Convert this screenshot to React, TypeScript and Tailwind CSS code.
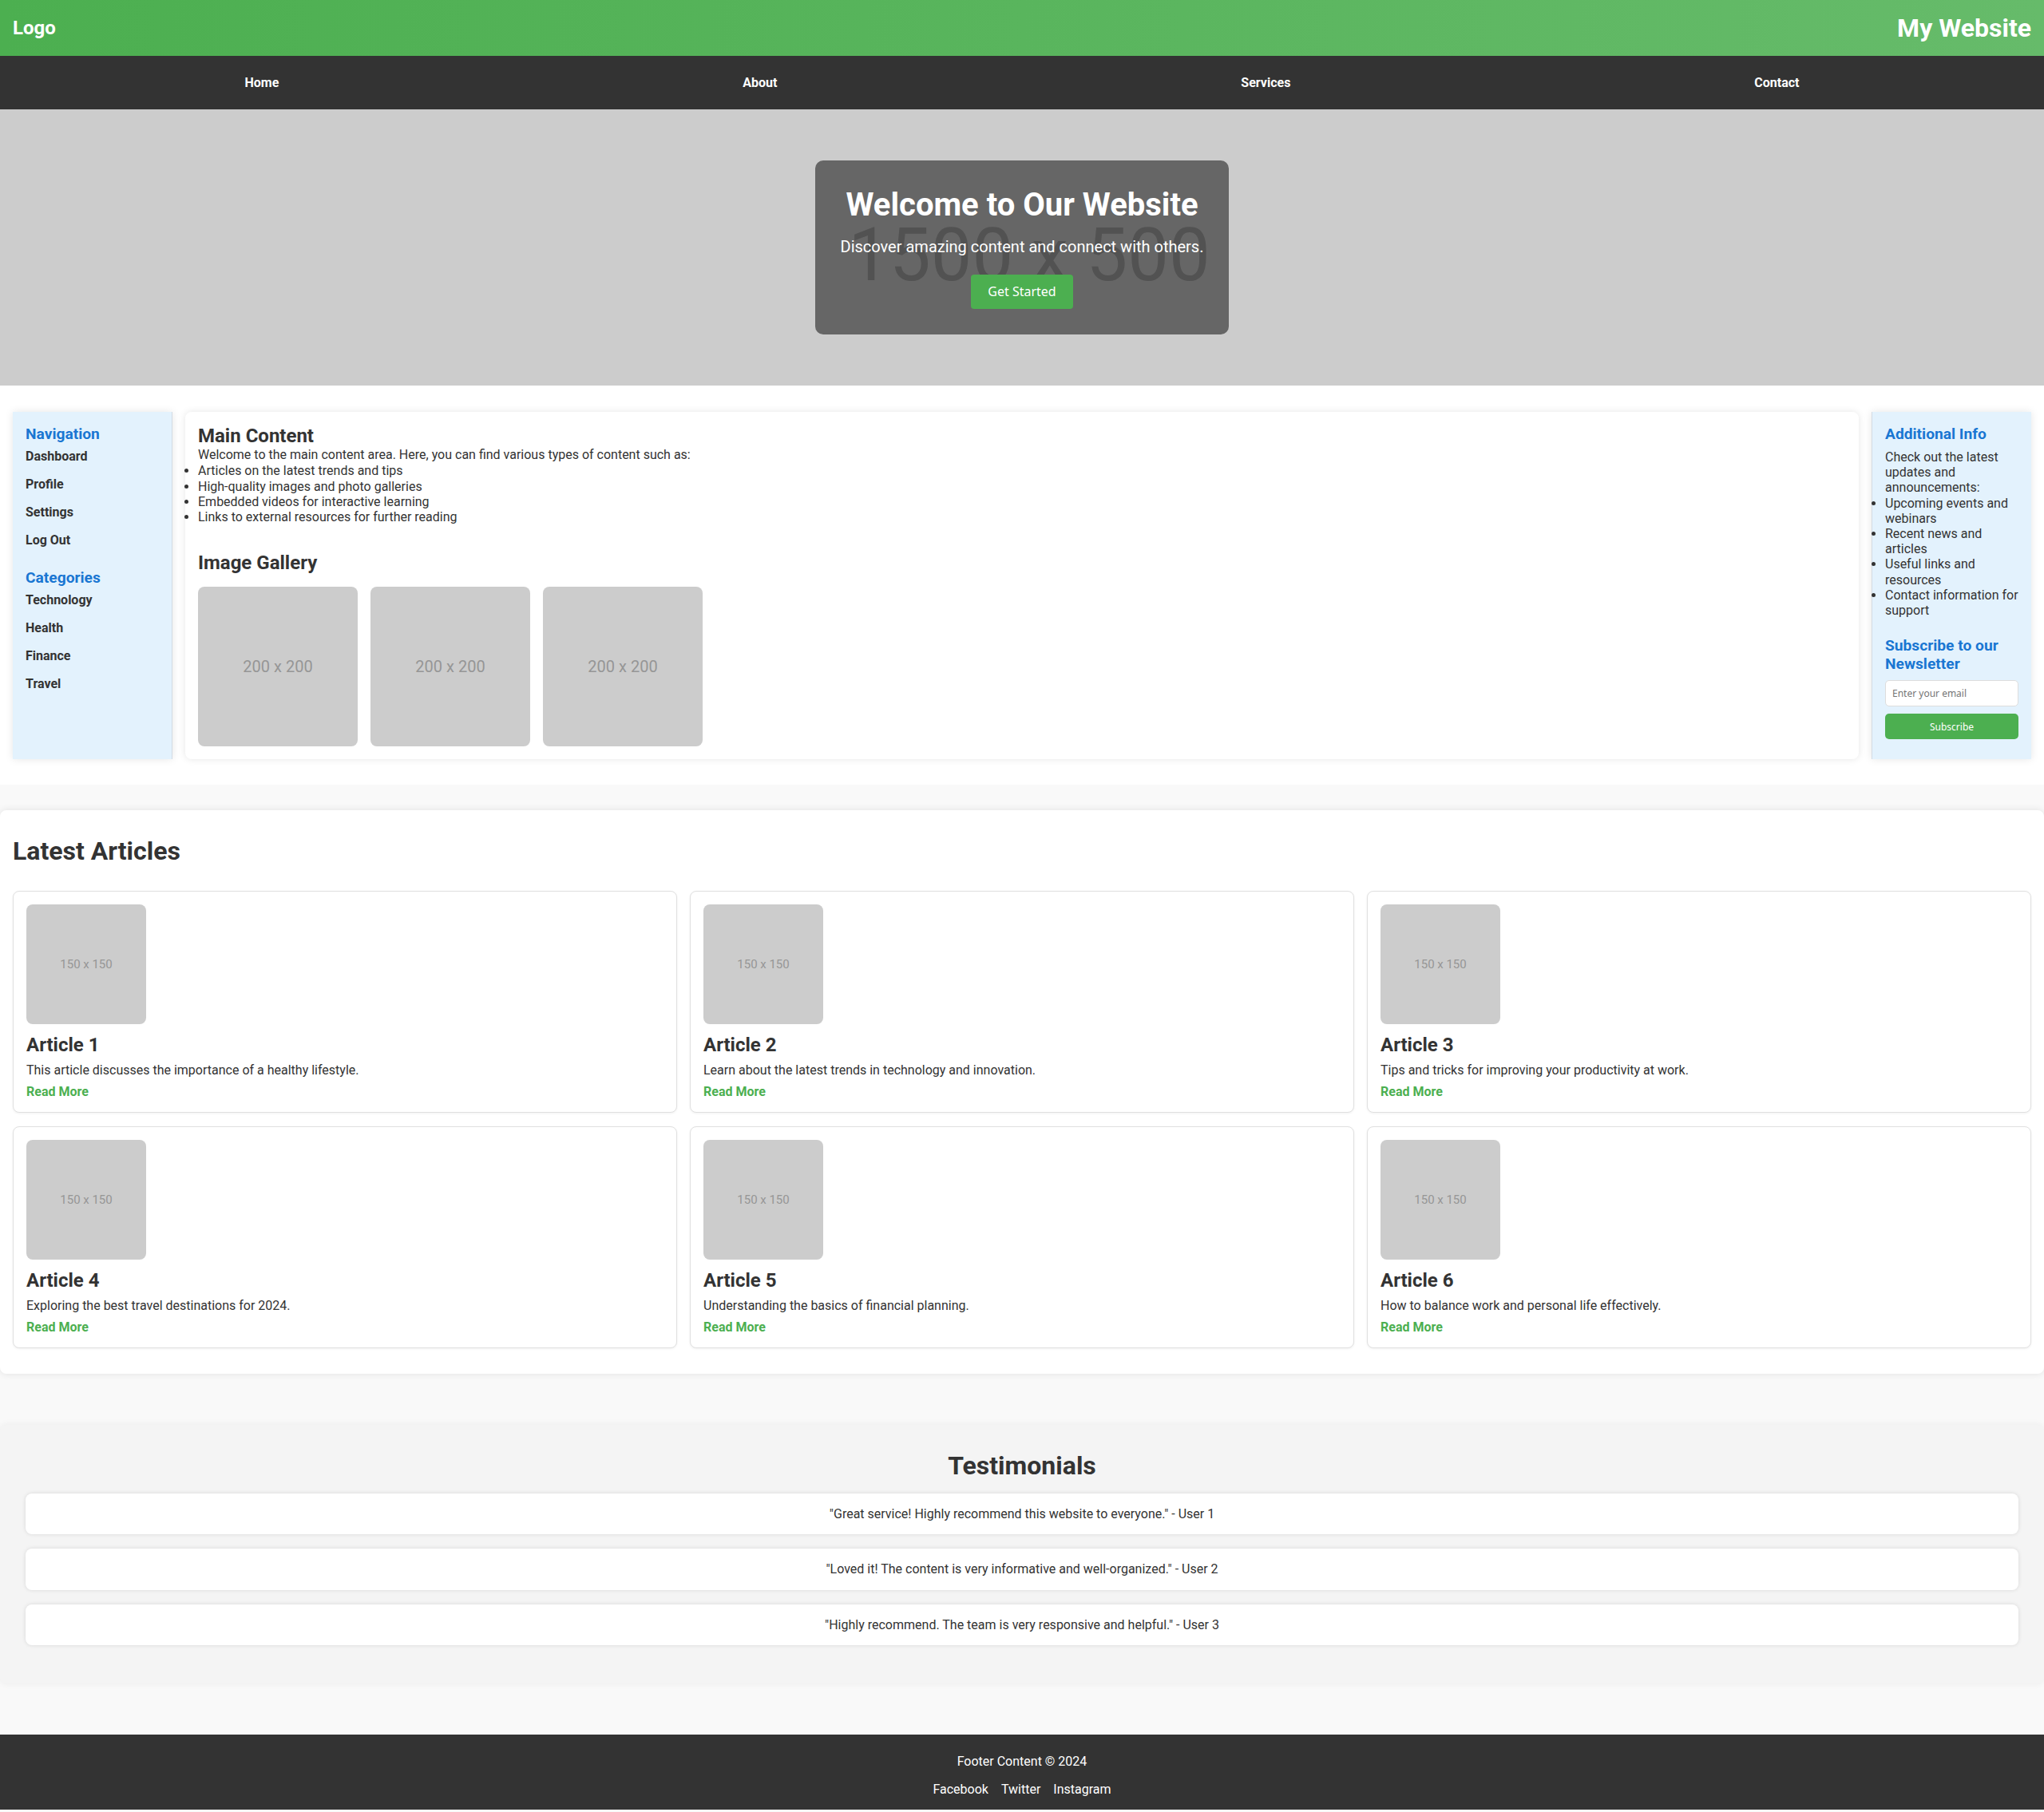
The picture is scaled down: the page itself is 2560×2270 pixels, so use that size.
import React from "react";

const articles = [
  { title: "Article 1", text: "This article discusses the importance of a healthy lifestyle." },
  { title: "Article 2", text: "Learn about the latest trends in technology and innovation." },
  { title: "Article 3", text: "Tips and tricks for improving your productivity at work." },
  { title: "Article 4", text: "Exploring the best travel destinations for 2024." },
  { title: "Article 5", text: "Understanding the basics of financial planning." },
  { title: "Article 6", text: "How to balance work and personal life effectively." },
];

const testimonials = [
  "\"Great service! Highly recommend this website to everyone.\" - User 1",
  "\"Loved it! The content is very informative and well-organized.\" - User 2",
  "\"Highly recommend. The team is very responsive and helpful.\" - User 3",
];

export default function App() {
  return (
    <div className="min-h-screen bg-[#f9f9f9] font-['Roboto',sans-serif] leading-[normal] text-[16px] text-[#333]">
      {/* Header */}
      <header className="h-[70px] px-4 flex items-center justify-between bg-[linear-gradient(to_right,#4caf50,#66bb6a)] text-white">
        <div className="text-[24px] font-bold">Logo</div>
        <h1 className="text-[32px] font-bold">My Website</h1>
      </header>

      {/* Nav */}
      <nav className="h-[67px] bg-[#333] px-4 flex items-center justify-around">
        {["Home", "About", "Services", "Contact"].map((n) => (
          <a key={n} className="text-white font-bold text-[16px]">
            {n}
          </a>
        ))}
      </nav>

      {/* Hero */}
      <section className="relative h-[346px] bg-[#cccccc] flex items-center justify-center overflow-hidden">
        <div className="absolute inset-0 flex items-center justify-center pt-[20px] pl-[18px]">
          <span className="text-[92px] leading-none text-[#a4a4a4] whitespace-nowrap">1500 x 500</span>
        </div>
        <div className="relative rounded-[10px] bg-black/50 p-8 text-white flex flex-col items-center text-center">
          <h2 className="text-[40px] font-bold">Welcome to Our Website</h2>
          <p className="text-[20px] mt-[17px]">Discover amazing content and connect with others.</p>
          <button className="mt-[23px] bg-[#4caf50] text-white px-[21px] py-3 rounded-[4px] font-['Noto_Sans',sans-serif] text-[16px] leading-[19px]">
            Get Started
          </button>
        </div>
      </section>

      {/* Main layout */}
      <section className="bg-white flex gap-4 px-4 pt-[33px] pb-8">
        <aside className="w-[200px] shrink-0 bg-[#e3f2fd] border-r border-[#d3dbe3] p-4 shadow-[0_0_10px_rgba(0,0,0,0.1)]">
          <h3 className="text-[19.2px] font-bold text-[#1976d2]">Navigation</h3>
          <ul className="mt-[7px]">
            {["Dashboard", "Profile", "Settings", "Log Out"].map((i) => (
              <li key={i} className="mb-4 font-bold text-[#333]">
                {i}
              </li>
            ))}
          </ul>
          <h3 className="mt-[26px] text-[19.2px] font-bold text-[#1976d2]">Categories</h3>
          <ul className="mt-[7px]">
            {["Technology", "Health", "Finance", "Travel"].map((i) => (
              <li key={i} className="mb-4 font-bold text-[#333]">
                {i}
              </li>
            ))}
          </ul>
        </aside>

        <main className="flex-1 bg-white rounded-lg p-4 shadow-[0_0_10px_rgba(0,0,0,0.1)]">
          <h2 className="text-[24px] font-bold">Main Content</h2>
          <p className="leading-[19.2px]">
            Welcome to the main content area. Here, you can find various types of content such as:
          </p>
          <ul className="list-disc leading-[19.4px] mt-[1px]">
            <li>Articles on the latest trends and tips</li>
            <li>High-quality images and photo galleries</li>
            <li>Embedded videos for interactive learning</li>
            <li>Links to external resources for further reading</li>
          </ul>
          <h2 className="mt-[33px] mb-4 text-[24px] font-bold">Image Gallery</h2>
          <div className="flex gap-4">
            {[0, 1, 2].map((i) => (
              <div
                key={i}
                className="w-[200px] h-[200px] rounded-lg bg-[#cccccc] flex items-center justify-center text-[20px] text-[#969696]"
              >
                200 x 200
              </div>
            ))}
          </div>
        </main>

        <aside className="w-[200px] shrink-0 bg-[#e3f2fd] border-l border-[#d3dbe3] p-4 shadow-[0_0_10px_rgba(0,0,0,0.1)]">
          <h3 className="text-[19.2px] font-bold text-[#1976d2]">Additional Info</h3>
          <p className="mt-2 leading-[19.2px]">Check out the latest updates and announcements:</p>
          <ul className="list-disc leading-[19.2px]">
            <li>Upcoming events and webinars</li>
            <li>Recent news and articles</li>
            <li>Useful links and resources</li>
            <li>Contact information for support</li>
          </ul>
          <h3 className="mt-[23px] text-[19.2px] font-bold text-[#1976d2]">Subscribe to our Newsletter</h3>
          <input
            type="email"
            placeholder="Enter your email"
            className="mt-[9px] w-full h-[33px] bg-white border border-[#dddddd] rounded-[5px] px-2 text-[12px] font-['Noto_Sans',sans-serif] placeholder:text-[#757575] outline-none"
          />
          <button className="mt-[9px] w-full h-[32px] bg-[#4caf50] text-white rounded-[5px] text-[12px] font-['Noto_Sans',sans-serif]">
            Subscribe
          </button>
        </aside>
      </section>

      {/* Latest Articles */}
      <section className="mt-8 bg-white rounded-lg shadow-[0_0_10px_rgba(0,0,0,0.1)] px-4 pt-4 pb-[32px]">
        <h2 className="mt-[16px] mb-[31px] text-[32px] font-bold">Latest Articles</h2>
        <div className="grid grid-cols-3 gap-x-4 gap-y-[17px]">
          {articles.map((a) => (
            <div
              key={a.title}
              className="bg-white border border-[#e0e0e0] rounded-lg p-4 shadow-[0_1px_3px_rgba(0,0,0,0.06)]"
            >
              <div className="w-[150px] h-[150px] rounded-lg bg-[#cccccc] flex items-center justify-center text-[15px] text-[#969696]">
                150 x 150
              </div>
              <h3 className="mt-[12px] text-[24px] font-bold">{a.title}</h3>
              <p className="mt-2">{a.text}</p>
              <a className="block mt-2 font-bold text-[#4caf50]">Read More</a>
            </div>
          ))}
        </div>
      </section>

      {/* Testimonials */}
      <section className="mt-16 bg-[#f4f4f4] rounded-lg shadow-[0_0_10px_rgba(0,0,0,0.06)] px-8 pt-8 pb-12">
        <h2 className="mb-4 text-[32px] font-bold text-center">Testimonials</h2>
        <div className="flex flex-col gap-[18px]">
          {testimonials.map((t) => (
            <div
              key={t}
              className="bg-white rounded-lg shadow-[0_0_5px_rgba(0,0,0,0.12)] px-4 py-4 text-center leading-[19.5px]"
            >
              {t}
            </div>
          ))}
        </div>
      </section>

      {/* Footer */}
      <footer className="mt-16 bg-[#333] text-white text-center pt-4 pb-4">
        <p className="mt-2 mb-4">Footer Content © 2024</p>
        <div className="flex justify-center gap-4">
          <a>Facebook</a>
          <a>Twitter</a>
          <a>Instagram</a>
        </div>
      </footer>
    </div>
  );
}
